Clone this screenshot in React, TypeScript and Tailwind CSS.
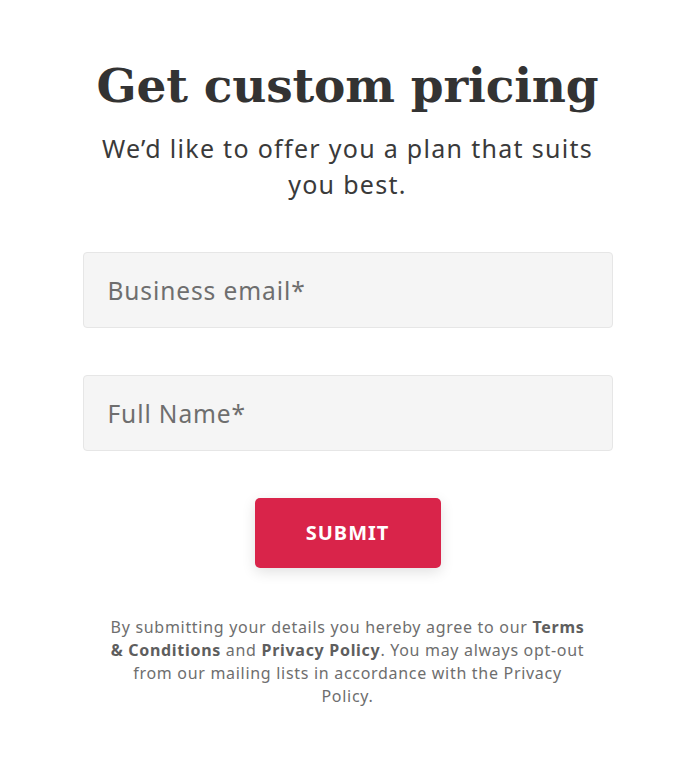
import React from 'react';

export default function App() {
  const sans = "font-['Noto_Sans',sans-serif]";
  return (
    <div className={`min-h-screen bg-white flex justify-center ${sans}`}>
      <div className="w-[530px] flex flex-col items-center pt-[54px]">
        <h1 className="font-['DejaVu_Serif',serif] font-bold text-[47px] leading-[64px] text-[#333333] tracking-[-0.2px]">
          Get custom pricing
        </h1>
        <p className="mt-[12px] text-center text-[25px] leading-[36px] text-[#3a3a3a] tracking-[1.3px] px-[8px]">
          We’d like to offer you a plan that suits you best.
        </p>

        <form className="w-full mt-[50px] flex flex-col" onSubmit={(e) => e.preventDefault()}>
          <input
            type="email"
            placeholder="Business email*"
            className="w-full h-[76px] rounded-[4px] border border-[#e6e6e6] bg-[#f5f5f5] px-[24px] text-[24.5px] tracking-[0.9px] text-[#333] placeholder:text-[#6e6e6e] outline-none"
          />
          <input
            type="text"
            placeholder="Full Name*"
            className="w-full h-[76px] mt-[47px] rounded-[4px] border border-[#e6e6e6] bg-[#f5f5f5] px-[24px] text-[24.5px] tracking-[0.9px] text-[#333] placeholder:text-[#6e6e6e] outline-none"
          />
          <button
            type="submit"
            className="self-center mt-[47px] w-[186px] h-[70px] rounded-[5px] bg-[#d9244a] text-white font-bold text-[20px] tracking-[1px] shadow-[0_4px_14px_rgba(0,0,0,0.12)]"
          >
            SUBMIT
          </button>
        </form>

        <p className="mt-[48px] text-center text-[16px] leading-[23px] text-[#6e6e6e] tracking-[0.7px] px-[28px]">
          By submitting your details you hereby agree to our <b className="font-bold text-[#5e5e5e]">Terms &amp; Conditions</b> and{' '}
          <b className="font-bold text-[#5e5e5e]">Privacy Policy</b>. You may always opt-out from our mailing lists in accordance with the
          Privacy Policy.
        </p>
      </div>
    </div>
  );
}
